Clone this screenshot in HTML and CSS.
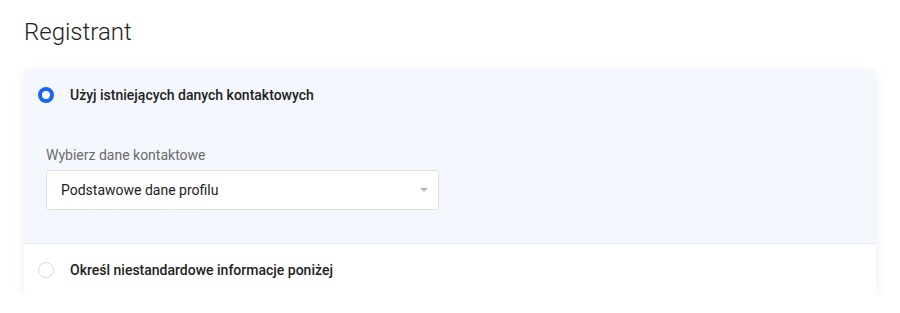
FILE: index.html
```html
<!DOCTYPE html>
<html lang="pl">
<head>
  <meta charset="UTF-8" />
  <title>Registrant</title>
  <meta name="viewport" content="width=device-width, initial-scale=1.0" />
  <link rel="stylesheet" href="styles.css">
</head>
<body>

  <h1>Registrant</h1>

  <div class="card">
    <div class="option option-active">
      <label class="radio-row">
        <span class="radio radio-checked"></span>
        <span class="radio-label">Użyj istniejących danych kontaktowych</span>
      </label>

      <div class="option-body">
        <div class="field-label">Wybierz dane kontaktowe</div>
        <div class="select">
          <span>Podstawowe dane profilu</span>
          <span class="caret"></span>
        </div>
      </div>
    </div>

    <div class="option">
      <label class="radio-row">
        <span class="radio"></span>
        <span class="radio-label">Określ niestandardowe informacje poniżej</span>
      </label>
    </div>
  </div>

</body>
</html>
```

FILE: styles.css
```css
* {
  margin: 0;
  padding: 0;
  box-sizing: border-box;
}

body {
  background: #fff;
  font-family: Roboto, 'Liberation Sans', sans-serif;
  color: #1f1f1f;
  padding: 17px 24px 0;
}

h1 {
  font-size: 24px;
  line-height: 30px;
  font-weight: 300;
  color: #222;
  margin-bottom: 22px;
}

.card {
  border-radius: 4px;
  overflow: hidden;
  box-shadow: 0 3px 12px rgba(0, 0, 0, 0.07);
  background: #fff;
}

.option {
  padding: 16px 14px 15px;
}

.option-active {
  background: #f4f7fe;
  padding: 16px 14px 33px;
  border-bottom: 1px solid #e6e9f1;
}

.radio-row {
  display: flex;
  align-items: center;
  height: 20px;
}

.radio {
  width: 16px;
  height: 16px;
  border-radius: 50%;
  border: 1.5px solid #d8d8d8;
  background: #fff;
  margin-right: 16px;
}

.radio-checked {
  border: 4.5px solid #1467ee;
}

.radio-label {
  font-size: 14px;
  font-weight: 500;
  color: #222;
}

.option-body {
  margin: 40px 0 0 8px;
}

.field-label {
  font-size: 14px;
  line-height: 20px;
  color: #6b6b6b;
  margin-bottom: 5px;
}

.select {
  width: 393px;
  height: 40px;
  background: #fff;
  border: 1px solid #e0e0e0;
  border-radius: 3px;
  display: flex;
  align-items: center;
  justify-content: space-between;
  padding: 0 10px 0 14px;
  font-size: 14px;
  color: #222;
}

.caret {
  width: 0;
  height: 0;
  border-left: 4px solid transparent;
  border-right: 4px solid transparent;
  border-top: 4px solid #b5b5b5;
}
```
